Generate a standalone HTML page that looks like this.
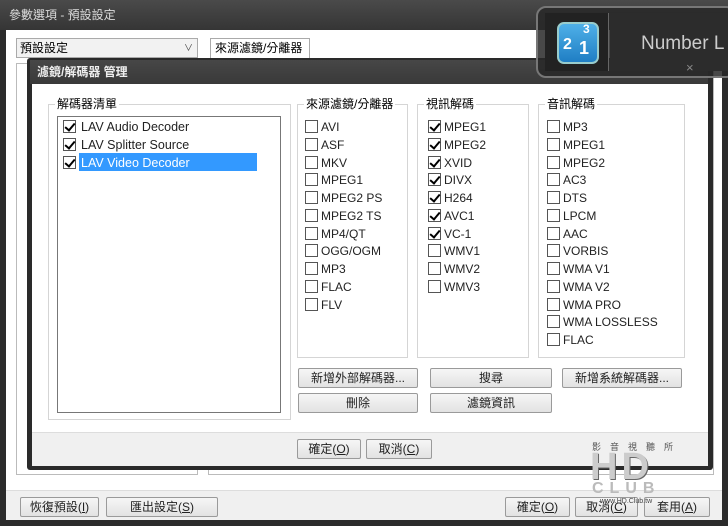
<!DOCTYPE html>
<html><head><meta charset="utf-8"><style>
*{box-sizing:border-box;margin:0;padding:0}
body{width:728px;height:526px;background:#2b2b2b;position:relative;overflow:hidden;font-family:"Liberation Sans","Noto Sans CJK TC",sans-serif;font-size:12px;color:#000}
.a{position:absolute}
.btn{position:absolute;height:20px;border:1px solid #9a9a9a;border-radius:2px;background:linear-gradient(#f6f6f6,#e2e2e2);text-align:center;line-height:18px;font-size:12px;color:#222}
.grp{position:absolute;border:1px solid #d5d5d5}
.gl{position:absolute;top:-8px;left:6px;background:#fff;padding:0 2px;font-size:12px;line-height:14px}
.cb{position:absolute;width:13px;height:13px;border:1px solid #555;background:#fff}
.cb.c::after{content:"";position:absolute;left:3px;top:0px;width:4px;height:8px;border:solid #000;border-width:0 2px 2px 0;transform:rotate(40deg)}
.it{position:absolute;font-size:12px;line-height:14px;color:#222}
</style></head><body>
<div class="a" style="left:0;top:0;width:728px;height:30px;background:linear-gradient(#4a4a4a,#353535)"></div>
<div class="a" style="left:9px;top:6px;color:#ddd;font-size:12px">參數選項 - 預設設定</div>
<div class="a" style="left:6px;top:30px;width:716px;height:490px;background:#fff"></div>
<div class="a" style="left:6px;top:490px;width:716px;height:30px;background:#f0f0f0;border-top:1px solid #ddd"></div>
<div class="a" style="left:16px;top:38px;width:182px;height:20px;border:1px solid #aaa;background:#f2f2f2;padding:2px 3px;line-height:14px">預設設定<span style="position:absolute;right:4px;font-size:9px;color:#444">∨</span></div>
<div class="a" style="left:210px;top:38px;width:100px;height:20px;border:1px solid #aaa;border-bottom:none;padding:2px 4px;line-height:14px">來源濾鏡/分離器</div>
<div class="a" style="left:16px;top:63px;width:182px;height:412px;border:1px solid #bbb"></div>
<div class="a" style="left:208px;top:58px;width:506px;height:417px;border:1px solid #bbb"></div>
<!-- inner dialog -->
<div class="a" style="left:27px;top:58px;width:686px;height:412px;background:#2a2a2a;border-radius:3px"></div>
<div class="a" style="left:30px;top:60px;width:678px;height:24px;background:linear-gradient(#474747,#393939)"></div>
<div class="a" style="left:37px;top:63px;color:#eee;font-weight:bold;font-size:12px">濾鏡/解碼器 管理</div>
<div class="a" style="left:32px;top:84px;width:676px;height:349px;background:#fff"></div>
<div class="a" style="left:32px;top:432px;width:676px;height:34px;background:#f0f0f0;border-top:1px solid #ddd"></div>
<div class="grp" style="left:48px;top:104px;width:243px;height:316px"><div class="gl">解碼器清單</div></div>
<div class="a" style="left:57px;top:116px;width:224px;height:297px;border:1px solid #777;background:#fff"></div>
<div class="a" style="left:79px;top:153px;width:178px;height:18px;background:#3399ff"></div>
<div class="cb c" style="left:63px;top:120px"></div><div class="it" style="left:81px;top:120px;font-size:12.5px">LAV Audio Decoder</div>
<div class="cb c" style="left:63px;top:138px"></div><div class="it" style="left:81px;top:138px;font-size:12.5px">LAV Splitter Source</div>
<div class="cb c" style="left:63px;top:156px"></div><div class="it" style="left:81px;top:156px;font-size:12.5px;color:#fff">LAV Video Decoder</div>
<div class="grp" style="left:297px;top:104px;width:111px;height:254px"><div class="gl">來源濾鏡/分離器</div></div>
<div class="grp" style="left:417px;top:104px;width:112px;height:254px"><div class="gl">視訊解碼</div></div>
<div class="grp" style="left:538px;top:104px;width:147px;height:254px"><div class="gl">音訊解碼</div></div>
<div id="lists"></div>
<div class="btn" style="left:298px;top:368px;width:120px">新增外部解碼器...</div>
<div class="btn" style="left:430px;top:368px;width:122px">搜尋</div>
<div class="btn" style="left:562px;top:368px;width:120px">新增系統解碼器...</div>
<div class="btn" style="left:298px;top:393px;width:120px">刪除</div>
<div class="btn" style="left:430px;top:393px;width:122px">濾鏡資訊</div>
<div class="btn" style="left:297px;top:439px;width:64px">確定(<u>O</u>)</div>
<div class="btn" style="left:366px;top:439px;width:66px">取消(<u>C</u>)</div>
<!-- outer buttons -->
<div class="btn" style="left:20px;top:497px;width:79px">恢復預設(<u>I</u>)</div>
<div class="btn" style="left:106px;top:497px;width:112px">匯出設定(<u>S</u>)</div>
<div class="btn" style="left:505px;top:497px;width:65px">確定(<u>O</u>)</div>
<div class="btn" style="left:575px;top:497px;width:63px">取消(<u>C</u>)</div>
<div class="btn" style="left:644px;top:497px;width:66px">套用(<u>A</u>)</div>
<!-- watermark -->
<div class="a" style="left:592px;top:440px;font-size:9px;color:#555;letter-spacing:9px">影音視聽所</div>
<div class="a" style="left:590px;top:448px;font-size:38px;font-weight:bold;color:#ccc;line-height:38px;text-shadow:1px 1px 0 #666;letter-spacing:4px">HD</div>
<div class="a" style="left:592px;top:480px;font-size:16px;font-weight:bold;color:#bbb;letter-spacing:6px">CLUB</div>
<div class="a" style="left:600px;top:498px;font-size:7px;color:#444">www.HD.Club.tw</div>
<!-- number lock overlay -->
<div class="a" style="left:536px;top:6px;width:200px;height:72px;border-radius:10px;background:rgba(40,40,40,0.85);border:2px solid #777"></div>
<div class="a" style="left:545px;top:13px;width:64px;height:58px;background:#222;border-right:1px solid #666"></div>
<div class="a" style="left:610px;top:13px;width:118px;height:58px;background:#2c2c2c"></div>
<div class="a" style="left:557px;top:22px;width:42px;height:42px;border-radius:7px;background:linear-gradient(#4fb0e8,#1f7ec4);border:2px solid #9cc;color:#fff;font-weight:bold">
<span class="a" style="left:4px;top:12px;font-size:16px">2</span><span class="a" style="left:24px;top:-2px;font-size:12px">3</span><span class="a" style="left:20px;top:14px;font-size:18px">1</span></div>
<div class="a" style="left:641px;top:33px;font-size:19px;color:#ccc">Number L</div>
<div class="a" style="left:686px;top:60px;font-size:13px;color:#888">×</div>
<script>
function col(x,tx,items,checked){let h='';items.forEach((t,i)=>{let y=120+i*17.75;h+=`<div class="cb${i<checked?' c':''}" style="left:${x}px;top:${y}px"></div><div class="it" style="left:${tx}px;top:${y}px">${t}</div>`});return h}
document.getElementById('lists').innerHTML=
col(305,321,['AVI','ASF','MKV','MPEG1','MPEG2 PS','MPEG2 TS','MP4/QT','OGG/OGM','MP3','FLAC','FLV'],0)+
col(428,444,['MPEG1','MPEG2','XVID','DIVX','H264','AVC1','VC-1','WMV1','WMV2','WMV3'],7)+
col(547,563,['MP3','MPEG1','MPEG2','AC3','DTS','LPCM','AAC','VORBIS','WMA V1','WMA V2','WMA PRO','WMA LOSSLESS','FLAC'],0);
</script>
</body></html>
